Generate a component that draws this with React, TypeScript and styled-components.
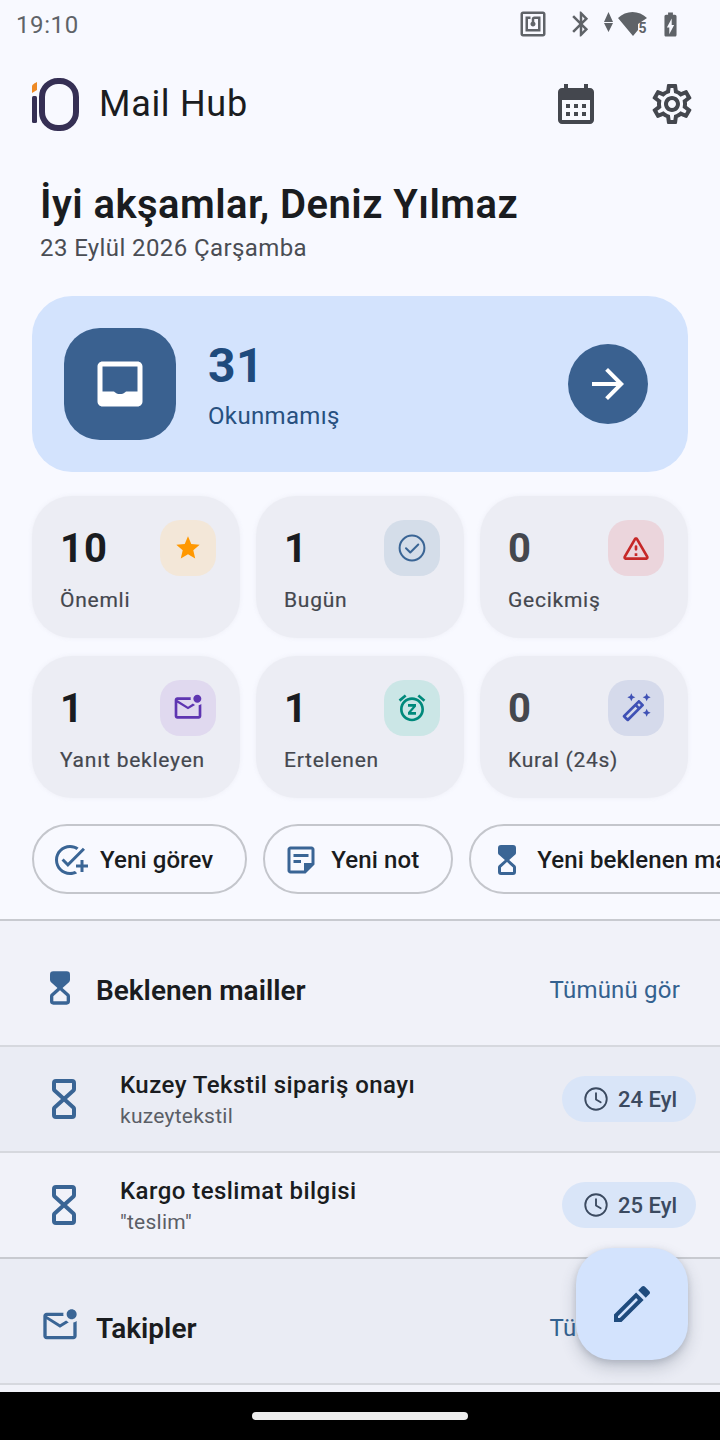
import React from "react";
import styled, { createGlobalStyle } from "styled-components";

const Global = createGlobalStyle`
  html, body { margin: 0; padding: 0; background: #000; }
  body { font-family: Roboto, "Noto Sans", sans-serif; }
`;

const Screen = styled.div`
  position: relative;
  width: 720px;
  height: 1440px;
  background: #f8f9ff;
  overflow: hidden;
  display: flex;
  flex-direction: column;
`;
const Main = styled.main`
  flex: 1;
  min-height: 0;
  overflow: hidden;
  display: flex;
  flex-direction: column;
`;
const StatusBar = styled.div`
  height: 48px;
  flex: none;
  display: flex;
  align-items: center;
  padding: 0 35px 0 16px;
  color: #5f6368;
`;
const Clock = styled.span`
  font-size: 24px;
  letter-spacing: 0.6px;
  padding-top: 2px;
  flex: 1;
`;
const StatusIcons = styled.div`
  display: flex;
  align-items: center;
  gap: 4px;
`;
const Glyph = styled.svg<{ $size: number; $color: string }>`
  width: ${(p) => p.$size}px;
  height: ${(p) => p.$size}px;
  flex: none;
  display: block;
  fill: ${(p) => p.$color};
`;
const StrokeGlyph = styled(Glyph)<{ $stroke: number }>`
  fill: none;
  stroke: ${(p) => p.$color};
  stroke-width: ${(p) => p.$stroke};
  stroke-linecap: round;
  stroke-linejoin: round;
`;
const StatusGap = styled.span`
  width: 10px;
`;
const Header = styled.header`
  height: 112px;
  flex: none;
  display: flex;
  align-items: center;
  padding: 0 24px 0 32px;
`;
const AppName = styled.h1`
  flex: 1;
  margin: 0 0 0 19px;
  font-size: 36px;
  font-weight: 400;
  letter-spacing: 0.7px;
  color: #1a1c20;
`;
const HeaderActions = styled.div`
  display: flex;
  gap: 48px;
`;
const Greeting = styled.section`
  flex: none;
  padding: 20px 40px 32px;
`;
const Hello = styled.h2`
  margin: 0;
  padding-top: 1px;
  height: 47px;
  font-size: 40px;
  line-height: 48px;
  font-weight: 600;
  letter-spacing: 0.45px;
  color: #1a1c20;
`;
const DateLine = styled.p`
  margin: 4px 0 0;
  font-size: 24px;
  line-height: 32px;
  letter-spacing: 0.4px;
  color: #4a4d54;
`;
const Hero = styled.section`
  flex: none;
  margin: 0 32px;
  height: 176px;
  box-sizing: border-box;
  padding: 0 40px 0 32px;
  border-radius: 40px;
  background: #d3e3fd;
  display: flex;
  align-items: center;
`;
const HeroTile = styled.div`
  width: 112px;
  height: 112px;
  border-radius: 36px;
  background: #3a6190;
  display: flex;
  align-items: center;
  justify-content: center;
`;
const HeroText = styled.div`
  flex: 1;
  margin-left: 32px;
  padding-top: 2px;
`;
const HeroCount = styled.div`
  font-size: 48px;
  line-height: 56px;
  font-weight: 700;
  letter-spacing: 0.5px;
  color: #1f4b7d;
`;
const HeroLabel = styled.div`
  margin-top: 6px;
  font-size: 24px;
  line-height: 32px;
  letter-spacing: 0.35px;
  color: #27507f;
`;
const HeroArrow = styled.div`
  width: 80px;
  height: 80px;
  border-radius: 50%;
  background: #3a6190;
  display: flex;
  align-items: center;
  justify-content: center;
`;
const StatGrid = styled.section`
  flex: none;
  margin: 24px 32px 0;
  display: grid;
  grid-template-columns: repeat(3, 208px);
  grid-auto-rows: 142px;
  column-gap: 16px;
  row-gap: 18px;
`;
const StatCard = styled.div`
  position: relative;
  box-sizing: border-box;
  padding: 24px 24px 0 28px;
  border-radius: 40px;
  background: #ecedf4;
  box-shadow: 0 0 4px rgba(236, 237, 244, 0.9);
  display: flex;
  flex-direction: column;
`;
const StatTop = styled.div`
  display: flex;
  justify-content: space-between;
  align-items: flex-start;
`;
const StatNumber = styled.div<{ $muted: boolean }>`
  margin-top: 1px;
  font-size: 40px;
  line-height: 56px;
  font-weight: 700;
  letter-spacing: 1px;
  color: ${(p) => (p.$muted ? "#44474e" : "#1a1c20")};
`;
const StatTile = styled.div<{ $tint: string }>`
  width: 56px;
  height: 56px;
  border-radius: 20px;
  background: ${(p) => p.$tint};
  display: flex;
  align-items: center;
  justify-content: center;
`;
const StatLabel = styled.div`
  margin-top: 8px;
  font-size: 21px;
  line-height: 30px;
  letter-spacing: 0.75px;
  color: #44474e;
  -webkit-text-stroke: 0.2px #44474e;
  white-space: nowrap;
`;
const ChipRow = styled.div`
  flex: none;
  margin-top: 26px;
  padding: 0 0 25px 32px;
  display: flex;
  gap: 16px;
  overflow: hidden;
`;
const Chip = styled.div`
  flex: none;
  box-sizing: border-box;
  height: 70px;
  padding: 2px 32px 0 18px;
  border: 2px solid #c4c6cc;
  border-radius: 35px;
  display: flex;
  align-items: center;
  gap: 12px;
  font-size: 24px;
  font-weight: 500;
  letter-spacing: 0.1px;
  color: #1a1c20;
  white-space: nowrap;
`;
const SectionHead = styled.div<{ $alt: boolean }>`
  flex: none;
  height: 126px;
  box-sizing: border-box;
  padding: 14px 40px 0;
  display: flex;
  align-items: center;
  gap: 16px;
  border-top: 2px solid #c8cad0;
  background: ${(p) => (p.$alt ? "#eaecf4" : "#f1f2f9")};
  svg {
    margin-bottom: 4px;
  }
`;
const SectionTitle = styled.h3`
  flex: 1;
  margin: 0;
  font-size: 28px;
  font-weight: 600;
  color: #1a1c20;
`;
const SeeAll = styled.span`
  font-size: 24px;
  letter-spacing: 0.2px;
  color: #34618f;
`;
const Row = styled.div<{ $alt: boolean }>`
  flex: none;
  height: 106px;
  box-sizing: border-box;
  padding: 0 24px 0 40px;
  display: flex;
  align-items: center;
  gap: 32px;
  border-top: 2px solid #d6d8de;
  background: ${(p) => (p.$alt ? "#eaecf4" : "#f1f2f9")};
`;
const RowText = styled.div`
  flex: 1;
  min-width: 0;
  padding-top: 2px;
`;
const RowTitle = styled.div`
  font-size: 24px;
  line-height: 32px;
  font-weight: 500;
  letter-spacing: 0.45px;
  color: #1a1c20;
`;
const RowSub = styled.div`
  font-size: 21px;
  line-height: 30px;
  letter-spacing: 0.25px;
  color: #5b5e66;
`;
const DatePill = styled.div`
  width: 134px;
  height: 46px;
  box-sizing: border-box;
  padding-left: 20px;
  border-radius: 23px;
  background: #d9e5f8;
  display: flex;
  align-items: center;
  gap: 8px;
  font-size: 22px;
  font-weight: 500;
  color: #3b4a60;
`;
const Tail = styled.div`
  flex: 1;
  border-top: 2px solid #d6d8de;
  background: #f1f2f9;
`;
const NavBar = styled.div`
  flex: none;
  height: 48px;
  background: #000;
  display: flex;
  align-items: center;
  justify-content: center;
`;
const NavHandle = styled.div`
  width: 216px;
  height: 8px;
  border-radius: 4px;
  background: #ededed;
`;
const Fab = styled.button`
  position: absolute;
  left: 576px;
  top: 1248px;
  width: 112px;
  height: 112px;
  padding: 0;
  border: 0;
  border-radius: 36px;
  background: #d3e3fd;
  box-shadow: 0 8px 16px rgba(60, 70, 90, 0.24), 0 2px 6px rgba(60, 70, 90, 0.18);
  display: flex;
  align-items: center;
  justify-content: center;
`;

const BLUE = "#3a6595";

const P = {
  calendar:
    "M19 4h-1V2h-2v2H8V2H6v2H5c-1.1 0-2 .9-2 2v14c0 1.1.9 2 2 2h14c1.1 0 2-.9 2-2V6c0-1.1-.9-2-2-2zm0 16H5V10h14v10zM9 14H7v-2h2v2zm4 0h-2v-2h2v2zm4 0h-2v-2h2v2zm-8 4H7v-2h2v2zm4 0h-2v-2h2v2zm4 0h-2v-2h2v2z",
  settings:
    "M19.43 12.98c.04-.32.07-.64.07-.98 0-.34-.03-.66-.07-.98l2.11-1.65c.19-.15.24-.42.12-.64l-2-3.46c-.09-.16-.26-.25-.44-.25-.06 0-.12.01-.17.03l-2.49 1c-.52-.4-1.08-.73-1.69-.98l-.38-2.65C14.46 2.18 14.25 2 14 2h-4c-.25 0-.46.18-.49.42l-.38 2.65c-.61.25-1.17.59-1.69.98l-2.49-1c-.06-.02-.12-.03-.18-.03-.17 0-.34.09-.43.25l-2 3.46c-.13.22-.07.49.12.64l2.11 1.65c-.04.32-.07.65-.07.98 0 .33.03.66.07.98l-2.11 1.65c-.19.15-.24.42-.12.64l2 3.46c.09.16.26.25.44.25.06 0 .12-.01.17-.03l2.49-1c.52.4 1.08.73 1.69.98l.38 2.65c.03.24.24.42.49.42h4c.25 0 .46-.18.49-.42l.38-2.65c.61-.25 1.17-.59 1.69-.98l2.49 1c.06.02.12.03.18.03.17 0 .34-.09.43-.25l2-3.46c.12-.22.07-.49-.12-.64l-2.11-1.65zm-1.98-1.71c.04.31.05.52.05.73 0 .21-.02.43-.05.73l-.14 1.13.89.7 1.08.84-.7 1.21-1.27-.51-1.04-.42-.9.68c-.43.32-.84.56-1.25.73l-1.06.43-.16 1.13-.2 1.35h-1.4l-.19-1.35-.16-1.13-1.06-.43c-.43-.18-.83-.41-1.23-.71l-.91-.7-1.06.43-1.27.51-.7-1.21 1.08-.84.89-.7-.14-1.13c-.03-.31-.05-.54-.05-.74s.02-.43.05-.73l.14-1.13-.89-.7-1.08-.84.7-1.21 1.27.51 1.04.42.9-.68c.43-.32.84-.56 1.25-.73l1.06-.43.16-1.13.2-1.35h1.39l.19 1.35.16 1.13 1.06.43c.43.18.83.41 1.23.71l.91.7 1.06-.43 1.27-.51.7 1.21-1.07.85-.89.7.14 1.13zM12 8c-2.21 0-4 1.79-4 4s1.79 4 4 4 4-1.79 4-4-1.79-4-4-4zm0 6c-1.1 0-2-.9-2-2s.9-2 2-2 2 .9 2 2-.9 2-2 2z",
  inbox:
    "M19 3H5c-1.1 0-2 .9-2 2v14c0 1.1.9 2 2 2h14c1.1 0 2-.9 2-2V5c0-1.1-.9-2-2-2zm0 12h-4.200c-.4 0-.7.2-.9.4-.5.4-1.100.6-1.900.6s-1.400-.2-1.900-.6c-.2-.2-.5-.4-.9-.4H5V5h14v10z",
  arrow: "M12 4l-1.41 1.41L16.17 11H4v2h12.17l-5.58 5.59L12 20l8-8z",
  star: "M12 17.27L18.18 21l-1.64-7.03L22 9.24l-7.19-.61L12 2 9.19 8.63 2 9.24l5.46 4.73L5.82 21z",
  warn:
    "M12 5.99 19.53 19H4.47L12 5.99M2.74 18c-.77 1.33.19 3 1.73 3h15.06c1.54 0 2.5-1.67 1.73-3L13.73 4.99c-.77-1.33-2.69-1.33-3.46 0L2.74 18zM11 11v2c0 .55.45 1 1 1s1-.45 1-1v-2c0-.55-.45-1-1-1s-1 .45-1 1zm0 5h2v2h-2z",
  unread:
    "M22 8.98V18c0 1.1-.9 2-2 2H4c-1.1 0-2-.9-2-2V6c0-1.1.9-2 2-2h10.1c-.06.32-.1.66-.1 1s.04.68.1 1H4l8 5 3.67-2.29c.47.43 1.02.76 1.63.98L12 13 4 8v10h16V9.9c.74-.15 1.42-.48 2-.92zM16 5c0 1.66 1.34 3 3 3s3-1.34 3-3-1.34-3-3-3-3 1.34-3 3z",
  snooze:
    "M7.88 3.39L6.6 1.86 2 5.71l1.29 1.53 4.59-3.85zM22 5.72l-4.6-3.86-1.29 1.53 4.6 3.86L22 5.72zM12 4c-4.97 0-9 4.03-9 9s4.02 9 9 9c4.97 0 9-4.03 9-9s-4.03-9-9-9zm0 16c-3.87 0-7-3.13-7-7s3.13-7 7-7 7 3.13 7 7-3.13 7-7 7zm-3-9h3.63L9 15.2V17h6v-2h-3.63L15 10.8V9H9v2z",
  wand:
    "M20 7l.94-2.06L23 4l-2.06-.94L20 1l-.94 2.06L17 4l2.06.94zM8.5 7l.94-2.06L11.5 4l-2.06-.94L8.5 1l-.94 2.06L5.5 4l2.06.94zM20 12.5l-.94 2.06-2.06.94 2.06.94.94 2.06.94-2.06L23 15.5l-2.06-.94zM17.71 9.12l-2.83-2.83C14.68 6.1 14.43 6 14.17 6c-.26 0-.51.1-.71.29L2.29 17.46c-.39.39-.39 1.02 0 1.41l2.83 2.83c.2.2.45.3.71.3s.51-.1.71-.29l11.17-11.17c.39-.39.39-1.03 0-1.42zm-3.54-.7l1.41 1.41L14.41 11 13 9.59l1.17-1.17zM5.83 19.59l-1.41-1.41L11.59 11 13 12.41l-7.17 7.18z",
  addTask:
    "M22 5.18L10.59 16.6l-4.24-4.24 1.41-1.41 2.83 2.83 10-10L22 5.18zM12 20c-4.41 0-8-3.59-8-8s3.59-8 8-8c1.57 0 3.04.46 4.28 1.25l1.45-1.45C16.1 2.67 14.13 2 12 2 6.48 2 2 6.48 2 12s4.48 10 10 10c1.73 0 3.36-.44 4.78-1.22l-1.5-1.5c-1 .45-2.11.72-3.28.72zm7-5h-3v2h3v3h2v-3h3v-2h-3v-3h-2v3z",
  note:
    "M19 5v9h-5v5H5V5h14M19 3H5C3.9 3 3 3.9 3 5v14c0 1.1.9 2 2 2h10l6-6V5C21 3.9 20.1 3 19 3zM12 14H7v-2h5v2zM17 10H7V8h10v2z",
  edit:
    "M3 17.25V21h3.75L17.81 9.94l-3.75-3.75L3 17.25zM5.92 19H5v-.92l9.06-9.06.92.92L5.92 19zM20.71 5.63l-2.34-2.34c-.39-.39-1.02-.39-1.41 0l-1.83 1.83 3.75 3.75 1.83-1.83c.39-.39.39-1.02 0-1.41z",
  nfc:
    "M20 2H4c-1.1 0-2 .9-2 2v16c0 1.1.9 2 2 2h16c1.1 0 2-.9 2-2V4c0-1.1-.9-2-2-2zm0 18H4V4h16v16zM18 6h-5c-1.1 0-2 .9-2 2v2.28c-.6.35-1 .98-1 1.72 0 1.1.9 2 2 2s2-.9 2-2c0-.74-.4-1.38-1-1.72V8h3v8H8V8h2V6H6v12h12V6z",
  bluetooth:
    "M17.71 7.71L12 2h-1v7.59L6.41 5 5 6.41 10.59 12 5 17.59 6.41 19 11 14.41V22h1l5.71-5.71-4.3-4.29 4.3-4.29zM13 5.83l1.88 1.88L13 9.59V5.83zm1.88 10.46L13 18.17v-3.76l1.88 1.88z",
  battery:
    "M15.67 4H14V2h-4v2H8.33C7.6 4 7 4.6 7 5.33v15.33C7 21.4 7.6 22 8.33 22h7.33c.74 0 1.34-.6 1.34-1.33V5.33C17 4.6 16.4 4 15.67 4zM11 20v-5.5H9L13 7v5.5h2L11 20z",
};

const Icon = ({ d, size, color }: { d: string; size: number; color: string }) => (
  <Glyph viewBox="0 0 24 24" $size={size} $color={color}>
    <path d={d} fillRule="evenodd" />
  </Glyph>
);

const HOUR_TOP = "M8 3h8a1 1 0 0 1 1 1v3.1c0 .3-.1.5-.3.7L12 12 7.3 7.8c-.2-.2-.3-.4-.3-.7V4a1 1 0 0 1 1-1z";
const HOUR_BOTTOM = "M8 21h8a1 1 0 0 0 1-1v-3.1c0-.3-.1-.5-.3-.7L12 12l-4.7 4.2c-.2.2-.3.4-.3.7V20a1 1 0 0 0 1 1z";

const Hourglass = ({ size, filled }: { size: number; filled?: boolean }) => (
  <StrokeGlyph viewBox="0 0 24 24" $size={size} $color={BLUE} $stroke={2}>
    <path d={HOUR_TOP} fill={filled ? BLUE : "none"} />
    <path d={HOUR_BOTTOM} />
  </StrokeGlyph>
);

const CheckRing = () => (
  <StrokeGlyph viewBox="0 0 24 24" $size={32} $color="#3a6595" $stroke={1.5}>
    <circle cx="12" cy="12" r="9.3" />
    <path d="M7.5 12.2l3.2 3.2 6-6" />
  </StrokeGlyph>
);

const ClockIcon = () => (
  <StrokeGlyph viewBox="0 0 24 24" $size={28} $color="#3b4a60" $stroke={1.6}>
    <circle cx="12" cy="12" r="9.2" />
    <path d="M12 7v5.4l4 2.4" />
  </StrokeGlyph>
);

const Logo = () => (
  <svg width="48" height="54" viewBox="0 0 48 54">
    <path d="M0 9.500c0-1.500 1-2.500 5-4.500v8l-5 3z" fill="#ee8a25" />
    <rect x="0" y="19" width="5" height="27" rx="1.500" fill="#352f54" />
    <rect x="10" y="4" width="34" height="47" rx="16" fill="none" stroke="#352f54" strokeWidth="6" />
  </svg>
);

const SignalCluster = () => (
  <svg width="52" height="30" viewBox="0 0 52 30">
    <path d="M8.500 3l4.500 10H4zM8.500 23L13 14H4z" fill="#5f6368" />
    <path d="M18 9C26 1 39 1 47 9l-9 6v6l-5 6z" fill="#5f6368" />
    <text x="38.500" y="24" fontFamily="Roboto" fontSize="14" fontWeight="700" fill="#5f6368">5</text>
  </svg>
);

const stats = [
  { n: 10, label: "Önemli", tint: "#f3e7d8", icon: <Icon d={P.star} size={28} color="#ff9800" /> },
  { n: 1, label: "Bugün", tint: "#d4dde9", icon: <CheckRing /> },
  { n: 0, label: "Gecikmiş", tint: "#ebd5dc", icon: <Icon d={P.warn} size={32} color="#c62828" /> },
  { n: 1, label: "Yanıt bekleyen", tint: "#e0d9ef", icon: <Icon d={P.unread} size={32} color="#5e35b1" /> },
  { n: 1, label: "Ertelenen", tint: "#cbe6e6", icon: <Icon d={P.snooze} size={32} color="#00897b" /> },
  { n: 0, label: "Kural (24s)", tint: "#d5daeb", icon: <Icon d={P.wand} size={32} color="#3f51b5" /> },
];

export default function App() {
  return (
    <Screen>
      <Global />
      <Main>
        <StatusBar>
          <Clock>19:10</Clock>
          <StatusIcons>
            <Icon d={P.nfc} size={30} color="#5f6368" />
            <StatusGap />
            <Icon d={P.bluetooth} size={30} color="#5f6368" />
            <SignalCluster />
            <Icon d={P.battery} size={29} color="#5f6368" />
          </StatusIcons>
        </StatusBar>
        <Header>
          <Logo />
          <AppName>Mail Hub</AppName>
          <HeaderActions>
            <Icon d={P.calendar} size={48} color="#44474e" />
            <Icon d={P.settings} size={48} color="#44474e" />
          </HeaderActions>
        </Header>
        <Greeting>
          <Hello>İyi akşamlar, Deniz Yılmaz</Hello>
          <DateLine>23 Eylül 2026 Çarşamba</DateLine>
        </Greeting>
        <Hero>
          <HeroTile>
            <Icon d={P.inbox} size={60} color="#ffffff" />
          </HeroTile>
          <HeroText>
            <HeroCount>31</HeroCount>
            <HeroLabel>Okunmamış</HeroLabel>
          </HeroText>
          <HeroArrow>
            <Icon d={P.arrow} size={48} color="#ffffff" />
          </HeroArrow>
        </Hero>
        <StatGrid>
          {stats.map((s) => (
            <StatCard key={s.label}>
              <StatTop>
                <StatNumber $muted={s.n === 0}>{s.n}</StatNumber>
                <StatTile $tint={s.tint}>{s.icon}</StatTile>
              </StatTop>
              <StatLabel>{s.label}</StatLabel>
            </StatCard>
          ))}
        </StatGrid>
        <ChipRow>
          <Chip>
            <Icon d={P.addTask} size={36} color={BLUE} />
            Yeni görev
          </Chip>
          <Chip>
            <Icon d={P.note} size={36} color={BLUE} />
            Yeni not
          </Chip>
          <Chip>
            <Hourglass size={36} filled />
            Yeni beklenen mail
          </Chip>
        </ChipRow>
        <SectionHead $alt={false}>
          <Hourglass size={40} filled />
          <SectionTitle>Beklenen mailler</SectionTitle>
          <SeeAll>Tümünü gör</SeeAll>
        </SectionHead>
        <Row $alt>
          <Hourglass size={48} />
          <RowText>
            <RowTitle>Kuzey Tekstil sipariş onayı</RowTitle>
            <RowSub>kuzeytekstil</RowSub>
          </RowText>
          <DatePill>
            <ClockIcon />
            24 Eyl
          </DatePill>
        </Row>
        <Row $alt={false}>
          <Hourglass size={48} />
          <RowText>
            <RowTitle>Kargo teslimat bilgisi</RowTitle>
            <RowSub>"teslim"</RowSub>
          </RowText>
          <DatePill>
            <ClockIcon />
            25 Eyl
          </DatePill>
        </Row>
        <SectionHead $alt>
          <Icon d={P.unread} size={40} color={BLUE} />
          <SectionTitle>Takipler</SectionTitle>
          <SeeAll>Tümünü gör</SeeAll>
        </SectionHead>
        <Tail />
      </Main>
      <NavBar>
        <NavHandle />
      </NavBar>
      <Fab aria-label="Yeni">
        <Icon d={P.edit} size={48} color="#1f4b7d" />
      </Fab>
    </Screen>
  );
}
